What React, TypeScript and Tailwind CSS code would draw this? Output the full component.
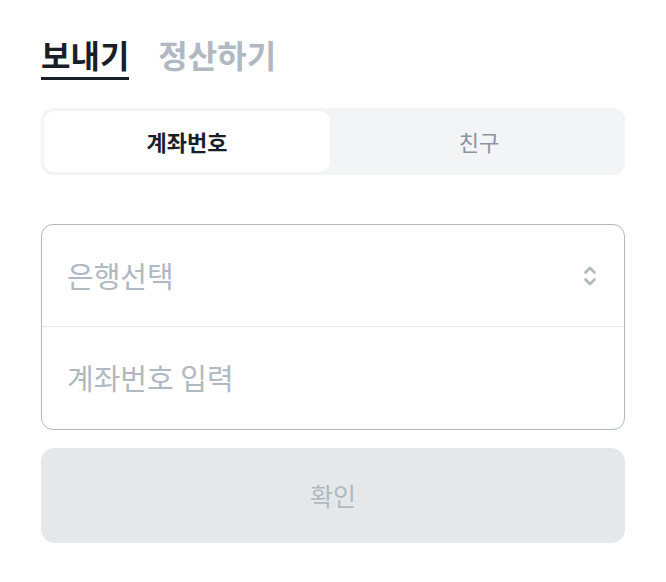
import React from "react";

const font = { fontFamily: '"Noto Sans CJK KR", "Noto Sans", sans-serif' };

export default function App() {
  return (
    <div className="min-h-[582px] w-[666px] bg-white px-[41px] pt-[32px]" style={font}>
      <div className="flex items-start gap-[29px]">
        <div className="flex flex-col">
          <span className="text-[32px] font-bold leading-[45px] text-[#191f28]">보내기</span>
          <div className="h-[3px] bg-[#191f28]" />
        </div>
        <span className="text-[32px] font-bold leading-[45px] text-[#b0b8c1]">정산하기</span>
      </div>

      <div className="mt-[28px] flex h-[67px] gap-[6px] rounded-[12px] bg-[#f2f4f6] p-[3px]">
        <div className="flex flex-1 items-center justify-center rounded-[10px] bg-white text-[22px] font-bold text-[#191f28]">
          계좌번호
        </div>
        <div className="flex flex-1 items-center justify-center text-[22px] text-[#8b95a1]">
          친구
        </div>
      </div>

      <div className="mt-[49px] rounded-[12px] border-[1.5px] border-[#b0b8c1]">
        <div className="flex h-[102px] items-center justify-between border-b border-[#e5e8eb] pl-[25px] pr-[27px]">
          <span className="text-[29px] text-[#b0b8c1]">은행선택</span>
          <svg width="14" height="24" viewBox="0 0 14 24" fill="none">
            <path d="M2.5 8.5 L7 4 L11.5 8.5" stroke="#b0b8c1" strokeWidth="2.6" strokeLinecap="round" strokeLinejoin="round" />
            <path d="M2.5 15.5 L7 20 L11.5 15.5" stroke="#b0b8c1" strokeWidth="2.6" strokeLinecap="round" strokeLinejoin="round" />
          </svg>
        </div>
        <div className="flex h-[102px] items-center pl-[25px]">
          <span className="text-[29px] text-[#b0b8c1]">계좌번호 입력</span>
        </div>
      </div>

      <button className="mt-[18px] flex h-[95px] w-full items-center justify-center rounded-[14px] bg-[#e5e8eb] text-[25px] text-[#b0b8c1]">
        확인
      </button>
    </div>
  );
}
